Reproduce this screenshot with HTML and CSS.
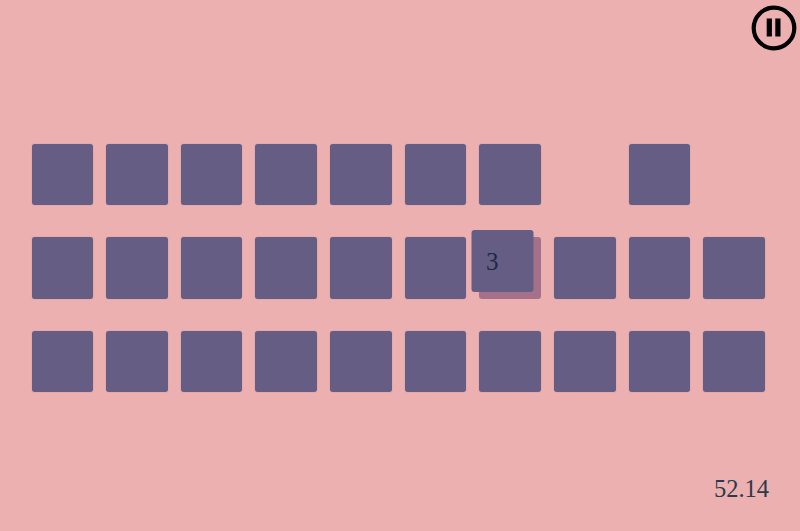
FILE: index.html
```html
<!DOCTYPE html>
<html lang="en">
<head>
    <meta charset="UTF-8">
    <meta name="viewport" content="width=device-width, initial-scale=1.0">
    <title>Memory</title>
    <link rel="stylesheet" href="styles.css">
</head>
<body>
    <div class="topbar">
        <button class="pause" aria-label="Pause">
            <svg width="46" height="46" viewBox="0 0 46 46">
                <circle cx="23" cy="23" r="20.3" fill="none" stroke="#000" stroke-width="4.2"/>
                <rect x="15.7" y="13.5" width="5.2" height="18" fill="#000"/>
                <rect x="24.3" y="13.5" width="5.2" height="18" fill="#000"/>
            </svg>
        </button>
    </div>
    <div class="board">
        <div class="tile"></div>
        <div class="tile"></div>
        <div class="tile"></div>
        <div class="tile"></div>
        <div class="tile"></div>
        <div class="tile"></div>
        <div class="tile"></div>
        <div class="tile empty"></div>
        <div class="tile"></div>
        <div class="tile empty"></div>

        <div class="tile"></div>
        <div class="tile"></div>
        <div class="tile"></div>
        <div class="tile"></div>
        <div class="tile"></div>
        <div class="tile"></div>
        <div class="tile flipped"><span class="num">3</span></div>
        <div class="tile"></div>
        <div class="tile"></div>
        <div class="tile"></div>

        <div class="tile"></div>
        <div class="tile"></div>
        <div class="tile"></div>
        <div class="tile"></div>
        <div class="tile"></div>
        <div class="tile"></div>
        <div class="tile"></div>
        <div class="tile"></div>
        <div class="tile"></div>
        <div class="tile"></div>
    </div>
    <div class="timer">52.14</div>
</body>
</html>
```

FILE: styles.css
```css
html, body {
    height: 100%;
}
body {
    margin: 0;
    background-color: #ebb0af;
    font-family: "Liberation Serif", serif;
    color: #1c2b45;
    overflow: hidden;
}
.topbar {
    height: 143.6px;
    display: flex;
    justify-content: flex-end;
    align-items: flex-start;
    padding: 4.5px 3px 0 0;
    box-sizing: border-box;
}
.pause {
    width: 46px;
    height: 46px;
    padding: 0;
    border: none;
    background: none;
}
.pause svg {
    display: block;
}
.board {
    display: grid;
    grid-template-columns: repeat(10, 61.6px);
    grid-auto-rows: 61.6px;
    column-gap: 13.07px;
    row-gap: 32px;
    padding-left: 31.5px;
}
.tile {
    background-color: #665d85;
    border-radius: 3px;
    box-shadow: 0 0 1px rgba(101, 92, 133, 0.6);
}
.tile.empty {
    background: none;
    box-shadow: none;
    border: 1px solid #ecb2b1;
}
.tile.flipped {
    display: flex;
    align-items: center;
    padding: 2px 0 0 14px;
    box-sizing: border-box;
    font-size: 25px;
    transform: translate(-7.5px, -7px);
    box-shadow: 7.5px 7px 0 #a5718a;
}
.timer {
    margin-top: 83px;
    padding-right: 31px;
    text-align: right;
    font-size: 24.5px;
    line-height: 28px;
    color: #2b3a4c;
}
```
